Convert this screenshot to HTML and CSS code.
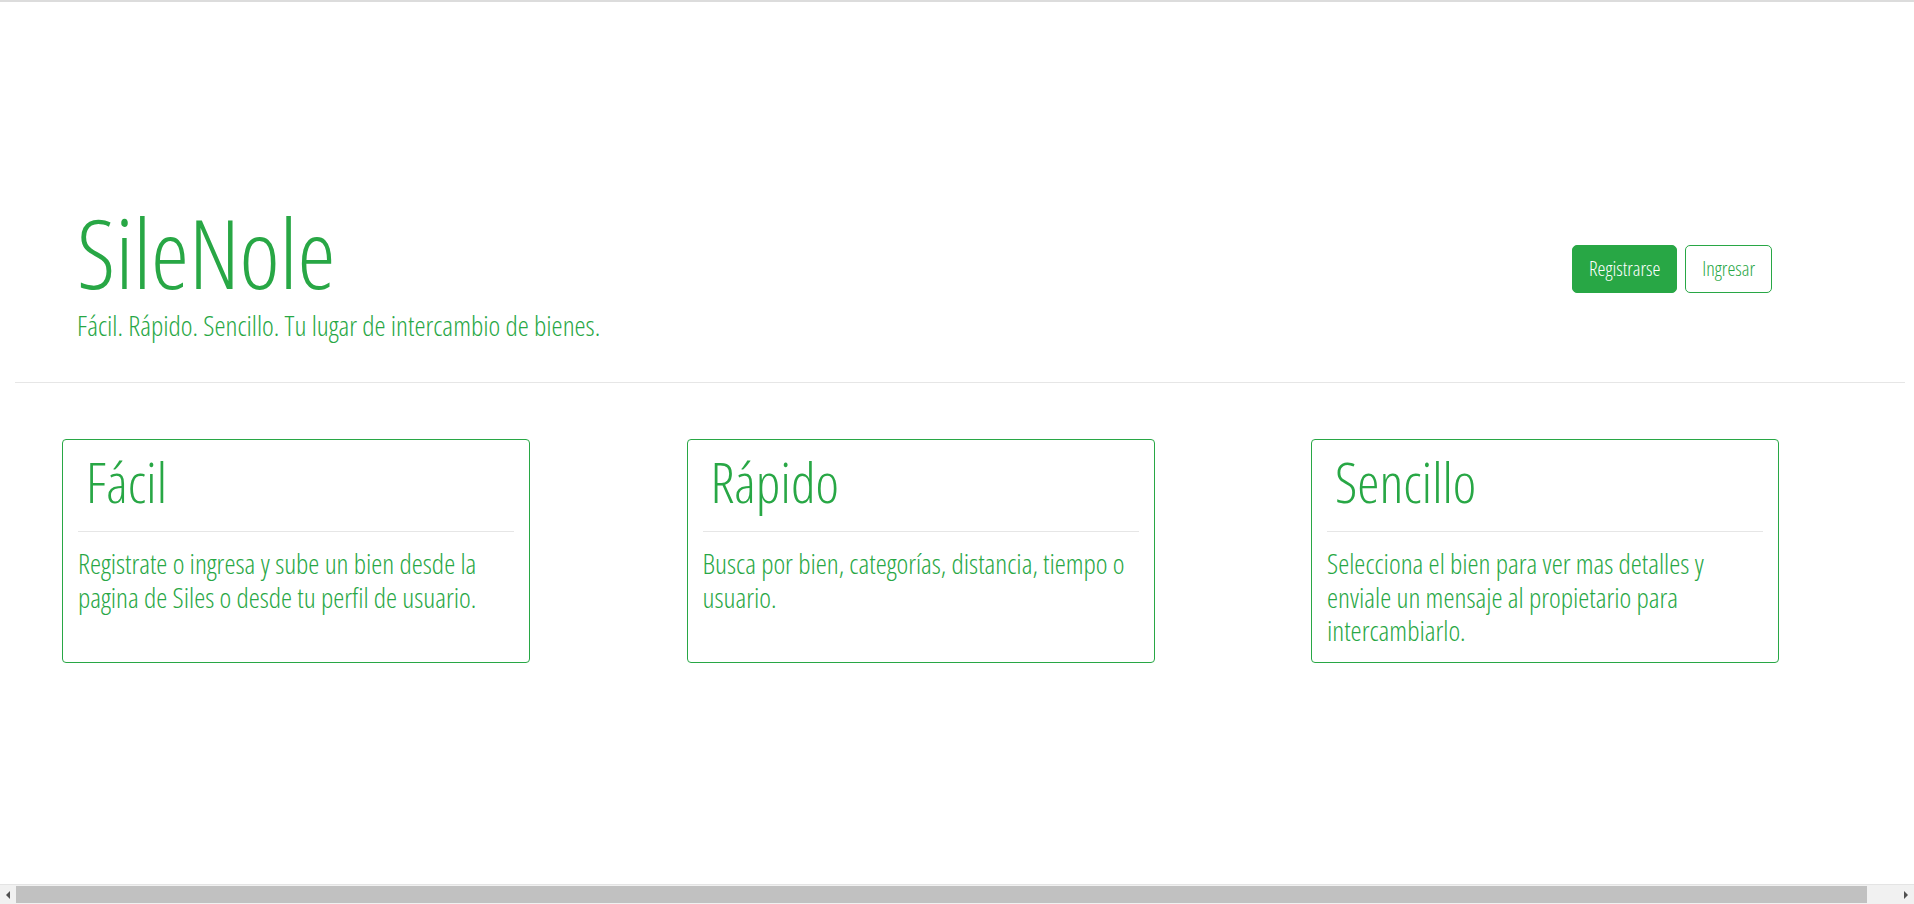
FILE: index.html
```html
<!DOCTYPE html>
<html lang="es">
<head>
<meta charset="utf-8">
<title>SileNole</title>
<link rel="stylesheet" href="styles.css">
</head>
<body>
<div class="topline"></div>
<header class="hero">
  <div class="brand">
    <h1 class="brand-title">SileNole</h1>
    <p class="brand-lead">Fácil. Rápido. Sencillo. Tu lugar de intercambio de bienes.</p>
  </div>
  <div class="actions">
    <a class="btn btn-solid" href="#">Registrarse</a>
    <a class="btn btn-outline" href="#">Ingresar</a>
  </div>
</header>
<hr class="divider">
<section class="features">
  <div class="col">
    <div class="card">
      <h2 class="card-title">Fácil</h2>
      <hr class="card-rule">
      <p class="card-text">Registrate o ingresa y sube un bien desde la pagina de Siles o desde tu perfil de usuario.</p>
    </div>
  </div>
  <div class="col">
    <div class="card">
      <h2 class="card-title">Rápido</h2>
      <hr class="card-rule">
      <p class="card-text">Busca por bien, categorías, distancia, tiempo o usuario.</p>
    </div>
  </div>
  <div class="col">
    <div class="card">
      <h2 class="card-title">Sencillo</h2>
      <hr class="card-rule">
      <p class="card-text">Selecciona el bien para ver mas detalles y enviale un mensaje al propietario para intercambiarlo.</p>
    </div>
  </div>
</section>
<div class="hscroll">
  <div class="hs-btn hs-left"><span class="tri-left"></span></div>
  <div class="hs-track"><div class="hs-thumb"></div></div>
  <div class="hs-btn hs-right"><span class="tri-right"></span></div>
</div>
</body>
</html>
```
FILE: styles.css
```css
html {
  overflow: hidden;
}
body {
  margin: 0;
  background: #fff;
  color: #28a745;
  font-family: "Open Sans", "Liberation Sans", sans-serif;
  font-stretch: 75%;
  font-weight: 300;
}
.topline {
  height: 2px;
  background: #dcdcdc;
}
.hero {
  display: flex;
  align-items: center;
  justify-content: space-between;
  padding: 192px 142px 0 77px;
}
.brand-title {
  margin: 0;
  padding-top: 3px;
  font-size: 96px;
  font-weight: 300;
  line-height: 109px;
}
.brand-lead {
  margin: 0;
  font-size: 28px;
  line-height: 38px;
  font-weight: 300;
}
.actions {
  display: flex;
  gap: 8px;
}
.btn {
  display: inline-block;
  font-size: 20px;
  line-height: 30px;
  padding: 8px 16px;
  border: 1px solid #28a745;
  border-radius: 5px;
  text-decoration: none;
  font-weight: 300;
}
.btn-solid {
  background: #28a745;
  color: #fff;
}
.btn-outline {
  background: #fff;
  color: #28a745;
}
.divider {
  margin: 38px 9px 0 15px;
  border: 0;
  border-top: 1px solid #e6e6e6;
  height: 0;
}
.features {
  display: grid;
  grid-template-columns: repeat(3, 624.5px);
  padding-left: 62px;
  margin-top: 56px;
}
.col {
  display: flex;
}
.card {
  width: 468px;
  box-sizing: border-box;
  border: 1px solid #28a745;
  border-radius: 4px;
  padding: 8px 15px 0;
}
.card-title {
  margin: 0;
  padding-left: 8px;
  font-size: 56px;
  line-height: 1.2;
  font-weight: 300;
}
.card-rule {
  margin: 16px 0 0;
  border: 0;
  border-top: 1px solid #e6e6e6;
  height: 0;
}
.card-text {
  margin: 15px 0 14px;
  font-size: 28px;
  line-height: 1.2;
  font-weight: 300;
}
.hscroll {
  position: fixed;
  left: 0;
  right: 0;
  bottom: 0;
  height: 20px;
  display: flex;
  background: #f1f1f1;
  border-top: 1px solid #e4e4e4;
  box-sizing: border-box;
}
.hs-btn {
  width: 16px;
  display: flex;
  align-items: center;
  justify-content: center;
}
.hs-track {
  flex: 1;
  padding-top: 1px;
}
.hs-thumb {
  width: 1851px;
  height: 17px;
  background: #c1c1c1;
}
.tri-left {
  width: 0;
  height: 0;
  border-top: 4px solid transparent;
  border-bottom: 4px solid transparent;
  border-right: 4px solid #505050;
}
.tri-right {
  width: 0;
  height: 0;
  border-top: 4px solid transparent;
  border-bottom: 4px solid transparent;
  border-left: 4px solid #505050;
}
```
